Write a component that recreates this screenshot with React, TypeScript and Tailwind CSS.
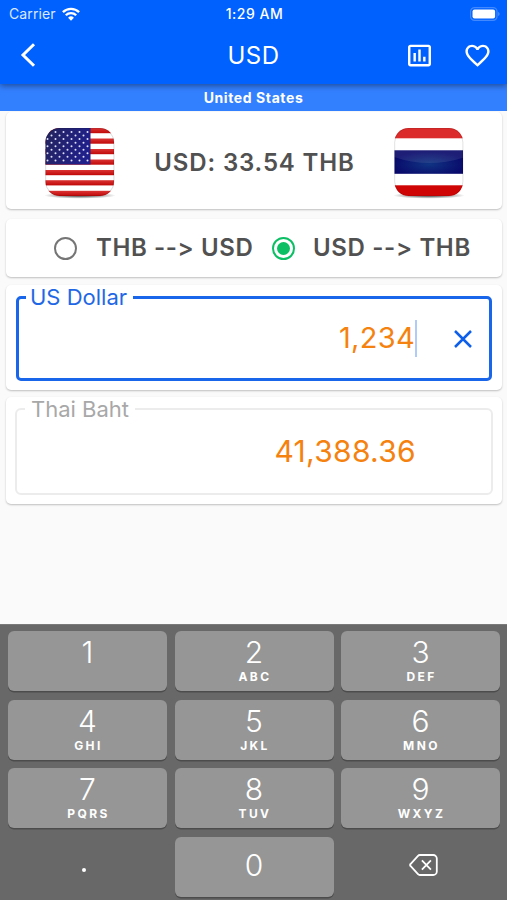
import React from "react";
import { MdFavoriteBorder, MdInsertChartOutlined } from "react-icons/md";

const keys = [
  { digit: "1", letters: "" },
  { digit: "2", letters: "ABC" },
  { digit: "3", letters: "DEF" },
  { digit: "4", letters: "GHI" },
  { digit: "5", letters: "JKL" },
  { digit: "6", letters: "MNO" },
  { digit: "7", letters: "PQRS" },
  { digit: "8", letters: "TUV" },
  { digit: "9", letters: "WXYZ" },
];

const StatusBar = () => (
  <div className="grid h-[27px] grid-cols-3 items-center pl-[9px] pr-[7px] text-[14px] leading-none">
    <div className="flex items-center gap-[6px] tracking-[0.1px]">
      <span className="w-[47px] text-[#dbe8ff]">Carrier</span>
      <svg width="18" height="14" viewBox="0 0 18 14" fill="none" stroke="white" strokeWidth="2.3">
        <path d="M0.9 5.1a11.6 11.6 0 0 1 16.2 0" />
        <path d="M3.8 8.2a7.4 7.4 0 0 1 10.4 0" />
        <path d="M6.1 10.7a4.1 4.1 0 0 1 5.8 0L9 13.7z" fill="white" stroke="none" />
      </svg>
    </div>
    <span className="text-center font-medium tracking-[0.5px]">1:29 AM</span>
    <svg className="justify-self-end" width="30" height="14" viewBox="0 0 30 14">
      <rect x="0.6" y="0.6" width="26.4" height="12.8" rx="4" fill="none" stroke="#4289ff" strokeWidth="1.2" />
      <rect x="2.5" y="2.4" width="22.6" height="9.2" rx="2" fill="white" />
      <path d="M28.3 4.8c1.6.8 1.6 3.6 0 4.4z" fill="#5c9bff" />
    </svg>
  </div>
);

const Header = () => (
  <header className="relative z-10 h-[84px] bg-[#0061ff] text-white shadow-[0_2px_6px_rgba(0,0,0,0.4)]">
    <StatusBar />
    <div className="grid h-[56px] grid-cols-3 items-center pl-[20px] pr-[15px]">
      <svg width="16" height="24" viewBox="0 0 16 24" fill="none" stroke="white" strokeWidth="3">
        <path d="M14 1.2 3 12l11 10.8" />
      </svg>
      <h1 className="pr-[5px] pt-[1px] text-center text-[24px] leading-none tracking-[0.4px]">USD</h1>
      <div className="flex items-center justify-end gap-[29px]">
        <MdInsertChartOutlined size={29} />
        <MdFavoriteBorder size={29} />
      </div>
    </div>
  </header>
);

const UsFlag = () => {
  const stars = [];
  for (let row = 0; row < 9; row++) {
    for (let col = 0; col < (row % 2 ? 5 : 6); col++) {
      stars.push(
        <circle
          key={`${row}-${col}`}
          cx={2.5 + col * 8 + (row % 2 ? 4 : 0)}
          cy={4 + row * 3.55}
          r="1"
          fill="#dfe2ff"
        />
      );
    }
  }
  return (
    <svg width="70" height="71" viewBox="0 0 70 71">
      <defs>
        <clipPath id="usClip">
          <rect x="0.5" y="0" width="68.5" height="68" rx="14" />
        </clipPath>
        <linearGradient id="usRed" x1="0" y1="0" x2="0" y2="1">
          <stop offset="0" stopColor="#db3434" />
          <stop offset="1" stopColor="#c00808" />
        </linearGradient>
        <linearGradient id="usBlue" x1="0" y1="0" x2="1" y2="0.3">
          <stop offset="0" stopColor="#25245c" />
          <stop offset="1" stopColor="#20208a" />
        </linearGradient>
        <radialGradient id="flagShadow">
          <stop offset="0.3" stopColor="#777" />
          <stop offset="1" stopColor="#777" stopOpacity="0" />
        </radialGradient>
      </defs>
      <ellipse cx="35" cy="67.5" rx="36" ry="3.2" fill="url(#flagShadow)" />
      <g clipPath="url(#usClip)">
        <rect width="70" height="68" fill="#fff" />
        {[0, 10.5, 21, 31.5, 42, 52.2, 62.8].map((y) => (
          <rect key={y} y={y} width="70" height="5.2" fill="url(#usRed)" />
        ))}
        <rect width="45.5" height="36.5" fill="url(#usBlue)" />
        {stars}
      </g>
      <rect x="0.7" y="0.3" width="68.2" height="67.5" rx="14" fill="none" stroke="#000" strokeOpacity="0.18" strokeWidth="0.8" />
    </svg>
  );
};

const ThaiFlag = () => (
  <svg width="70" height="71" viewBox="0 0 70 71">
    <defs>
      <clipPath id="thClip">
        <rect x="0.5" y="0" width="68.5" height="68" rx="14" />
      </clipPath>
      <radialGradient id="thBlue" cx="0.5" cy="0.6" r="0.55">
        <stop offset="0" stopColor="#103482" />
        <stop offset="1" stopColor="#08086a" />
      </radialGradient>
    </defs>
    <ellipse cx="35" cy="67.5" rx="36" ry="3.2" fill="url(#flagShadow)" />
    <g clipPath="url(#thClip)">
      <rect width="70" height="68" fill="#fff" />
      <rect width="70" height="10.3" fill="#dc2b2b" />
      <rect y="22.3" width="70" height="23.5" fill="url(#thBlue)" />
      <path d="M0 22.3h70v7Q35 41 0 29z" fill="#fff" fillOpacity="0.09" />
      <rect y="57.3" width="70" height="11" fill="#cf0505" />
    </g>
    <rect x="0.7" y="0.3" width="68.2" height="67.5" rx="14" fill="none" stroke="#000" strokeOpacity="0.15" strokeWidth="0.8" />
  </svg>
);

const cardClass = "rounded-[5px] bg-white shadow-[0_1px_2px_rgba(0,0,0,0.24)]";

const RateCard = () => (
  <div className={`${cardClass} flex h-[97px] items-center justify-between pl-[39px] pr-[38px] pt-[5px]`}>
    <UsFlag />
    <span className="text-[24px] font-semibold leading-none tracking-[0.85px] [font-feature-settings:'calt'_0]">
      USD: 33.54 THB
    </span>
    <ThaiFlag />
  </div>
);

const DirectionCard = () => (
  <div
    className={`${cardClass} mt-[10px] flex h-[58px] items-center pl-[48px] text-[24px] font-semibold leading-none [font-feature-settings:'calt'_0]`}
  >
    <div className="size-[23px] shrink-0 rounded-full border-[2.5px] border-[#757575]" />
    <span className="ml-[19px] w-[157px] whitespace-nowrap tracking-[0.6px]">THB --&gt; USD</span>
    <div className="ml-[19px] flex size-[23px] shrink-0 items-center justify-center rounded-full border-[2.5px] border-[#0abf64]">
      <div className="size-[13px] rounded-full bg-[#0abf64]" />
    </div>
    <span className="ml-[18px] whitespace-nowrap tracking-[0.65px]">USD --&gt; THB</span>
  </div>
);

const Caret = () => <div className="h-[37px] w-[2px] bg-[#b0cbf8]" />;

const Amounts = () => (
  <>
    <div className={`${cardClass} mt-[8px] h-[105px] px-[10px]`}>
      <fieldset className="h-[96px] rounded-[5px] border-[3px] border-[#1a66ea] pl-[7px]">
        <legend className="h-[24px] w-[107px] whitespace-nowrap pl-[4px] text-[22px] leading-[24px] text-[#1f68e5]">
          US Dollar
        </legend>
        <div className="flex h-[59px] items-center justify-end pr-[17px]">
          <span className="pb-[2px] text-[29px] leading-none tracking-[0.3px] text-[#f5820f]">1,234</span>
          <Caret />
          <svg className="ml-[37px]" width="18" height="18" viewBox="0 0 18 18" stroke="#0d5ee8" strokeWidth="2.5">
            <path d="M1 1l16 16M17 1L1 17" />
          </svg>
        </div>
      </fieldset>
    </div>
    <div className={`${cardClass} mt-[7px] h-[107px] px-[9px]`}>
      <fieldset className="h-[98px] rounded-[6px] border-2 border-[#ececec] pl-[8px]">
        <legend className="h-[24px] w-[110px] whitespace-nowrap pl-[6px] text-[22px] leading-[24px] text-[#a8a8a8]">
          Thai Baht
        </legend>
        <div className="flex h-[60px] items-center justify-end pr-[75px]">
          <span className="pb-[1px] text-[30px] leading-none tracking-[0.3px] text-[#f5820f]">41,388.36</span>
        </div>
      </fieldset>
    </div>
  </>
);

const keyClass = "h-[60px] rounded-[6px] bg-[#969696] shadow-[0_1.5px_0_#4c4c4c]";

const Keypad = () => (
  <div className="grid h-[276px] grid-cols-3 content-start gap-x-[7.5px] gap-y-[8.5px] border-t border-[#7a7a7a] bg-[#686868] pl-[8px] pr-[7px] pt-[6px] text-white">
    {keys.map(({ digit, letters }) => (
      <div key={digit} className={`${keyClass} flex flex-col items-center pt-[6px]`}>
        <span className="text-[30px] font-light leading-[31px]">{digit}</span>
        <span className="mt-[2px] pl-[2px] text-[12px] font-bold leading-[13px] tracking-[2.4px]">{letters}</span>
      </div>
    ))}
    <div className="flex h-[60px] items-center justify-center pr-[7px] pt-[7px]">
      <div className="size-[4px] rounded-full bg-white" />
    </div>
    <div className={`${keyClass} flex items-center justify-center pb-[3px]`}>
      <span className="text-[30px] font-light leading-none">0</span>
    </div>
    <div className="flex h-[60px] items-center justify-center pb-[3px] pl-[6px]">
      <svg width="29" height="22" viewBox="0 0 29 22" fill="none" stroke="white" strokeWidth="1.8">
        <path d="M10.8 1h13.4a3.6 3.6 0 0 1 3.6 3.6v12.8a3.6 3.6 0 0 1-3.6 3.6H10.8a2.4 2.4 0 0 1-1.8-.8L1.5 12a1.4 1.4 0 0 1 0-2L9 1.8A2.4 2.4 0 0 1 10.8 1z" />
        <path d="M12.9 6.4l9 9.2M21.9 6.4l-9 9.2" />
      </svg>
    </div>
  </div>
);

export default function App() {
  return (
    <div className="flex h-[900px] w-[507px] flex-col overflow-hidden bg-[#fafafa] font-['Inter',sans-serif] text-[#515151]">
      <Header />
      <div className="flex h-[27px] items-center justify-center bg-[#3380ff] text-[14px] font-bold leading-none tracking-[0.6px] text-white">
        United States
      </div>
      <main className="flex-1 pl-[6px] pr-[5px] pt-[1px]">
        <RateCard />
        <DirectionCard />
        <Amounts />
      </main>
      <Keypad />
    </div>
  );
}
